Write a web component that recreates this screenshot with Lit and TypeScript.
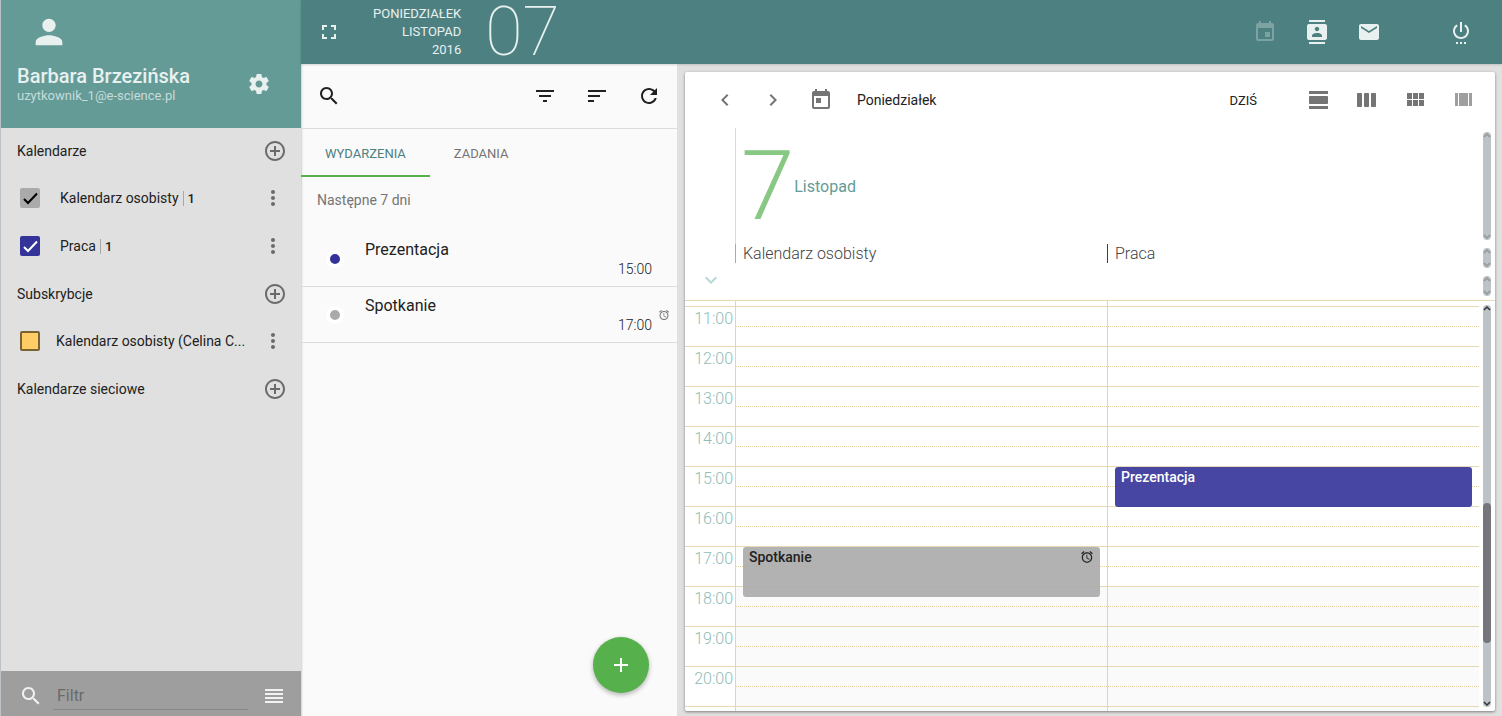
import { LitElement, html, css, svg } from "lit";
import { customElement, property } from "lit/decorators.js";
import { classMap } from "lit/directives/class-map.js";
import { styleMap } from "lit/directives/style-map.js";

const ICONS: Record<string, string> = {
  person: "M12 12c2.21 0 4-1.79 4-4s-1.79-4-4-4-4 1.79-4 4 1.79 4 4 4zm0 2c-2.67 0-8 1.34-8 4v2h16v-2c0-2.66-5.33-4-8-4z",
  settings:
    "M19.43 12.98c.04-.32.07-.64.07-.98s-.03-.66-.07-.98l2.11-1.65c.19-.15.24-.42.12-.64l-2-3.46c-.12-.22-.39-.3-.61-.22l-2.49 1c-.52-.4-1.08-.73-1.69-.98l-.38-2.65C14.46 2.18 14.25 2 14 2h-4c-.25 0-.46.18-.49.42l-.38 2.65c-.61.25-1.17.59-1.69.98l-2.49-1c-.23-.09-.49 0-.61.22l-2 3.46c-.13.22-.07.49.12.64l2.11 1.65c-.04.32-.07.65-.07.98s.03.66.07.98l-2.11 1.65c-.19.15-.24.42-.12.64l2 3.46c.12.22.39.3.61.22l2.49-1c.52.4 1.08.73 1.69.98l.38 2.65c.03.24.24.42.49.42h4c.25 0 .46-.18.49-.42l.38-2.65c.61-.25 1.17-.59 1.69-.98l2.49 1c.23.09.49 0 .61-.22l2-3.46c.12-.22.07-.49-.12-.64l-2.11-1.65zM12 15.5c-1.93 0-3.5-1.57-3.5-3.5s1.57-3.5 3.5-3.5 3.5 1.57 3.5 3.5-1.57 3.5-3.5 3.5z",
  addCircle:
    "M13 7h-2v4H7v2h4v4h2v-4h4v-2h-4V7zm-1-5C6.48 2 2 6.48 2 12s4.48 10 10 10 10-4.48 10-10S17.52 2 12 2zm0 18c-4.41 0-8-3.59-8-8s3.59-8 8-8 8 3.59 8 8-3.59 8-8 8z",
  more: "M12 8c1.1 0 2-.9 2-2s-.9-2-2-2-2 .9-2 2 .9 2 2 2zm0 2c-1.1 0-2 .9-2 2s.9 2 2 2 2-.9 2-2-.9-2-2-2zm0 6c-1.1 0-2 .9-2 2s.9 2 2 2 2-.9 2-2-.9-2-2-2z",
  search:
    "M15.5 14h-.79l-.28-.27C15.41 12.59 16 11.11 16 9.5 16 5.91 13.09 3 9.5 3S3 5.91 3 9.5 5.91 16 9.5 16c1.61 0 3.09-.59 4.23-1.57l.27.28v.79l5 4.99L20.49 19l-4.99-5zm-6 0C7.01 14 5 11.99 5 9.5S7.01 5 9.5 5 14 7.01 14 9.5 11.99 14 9.5 14z",
  reorder: "M3 15h18v-2H3v2zm0 4h18v-2H3v2zm0-8h18V9H3v2zm0-6v2h18V5H3z",
  fullscreen: "M7 14H5v5h5v-2H7v-3zm-2-4h2V7h3V5H5v5zm12 7h-3v2h5v-5h-2v3zM14 5v2h3v3h2V5h-5z",
  event:
    "M17 12h-5v5h5v-5zM16 1v2H8V1H6v2H5c-1.11 0-1.99.9-1.99 2L3 19c0 1.1.89 2 2 2h14c1.1 0 2-.9 2-2V5c0-1.1-.9-2-2-2h-1V1h-2zm3 18H5V8h14v11z",
  contacts:
    "M20 0H4v2h16V0zM4 24h16v-2H4v2zM20 4H4c-1.1 0-2 .9-2 2v12c0 1.1.9 2 2 2h16c1.1 0 2-.9 2-2V6c0-1.1-.9-2-2-2zm-8 2.75c1.24 0 2.25 1.01 2.25 2.25s-1.01 2.25-2.25 2.25S9.75 10.24 9.75 9 10.76 6.75 12 6.75zM17 17H7v-1.5c0-1.67 3.33-2.5 5-2.5s5 .83 5 2.5V17z",
  mail: "M20 4H4c-1.1 0-1.99.9-1.99 2L2 18c0 1.1.9 2 2 2h16c1.1 0 2-.9 2-2V6c0-1.1-.9-2-2-2zm0 4l-8 5-8-5V6l8 5 8-5v2z",
  power:
    "M7 24h2v-2H7v2zm4 0h2v-2h-2v2zm2-22h-2v10h2V2zm3.56 2.44l-1.45 1.45C16.84 6.94 18 8.83 18 11c0 3.31-2.69 6-6 6s-6-2.69-6-6c0-2.17 1.16-4.06 2.88-5.12L7.44 4.44C5.36 5.88 4 8.28 4 11c0 4.42 3.58 8 8 8s8-3.58 8-8c0-2.72-1.36-5.12-3.44-6.56zM15 24h2v-2h-2v2z",
  filter: "M10 18h4v-2h-4v2zM3 6v2h18V6H3zm3 7h12v-2H6v2z",
  sort: "M3 18h6v-2H3v2zM3 6v2h18V6H3zm0 7h12v-2H3v2z",
  refresh:
    "M17.65 6.35C16.2 4.9 14.21 4 12 4c-4.42 0-7.99 3.58-7.99 8s3.57 8 7.99 8c3.73 0 6.84-2.55 7.73-6h-2.08c-.82 2.33-3.04 4-5.65 4-3.31 0-6-2.69-6-6s2.69-6 6-6c1.66 0 3.14.69 4.22 1.78L13 11h7V4l-2.35 2.35z",
  left: "M15.41 7.41L14 6l-6 6 6 6 1.41-1.41L10.83 12z",
  right: "M10 6L8.59 7.41 13.17 12l-4.58 4.59L10 18l6-6z",
  down: "M16.59 8.59L12 13.17 7.41 8.59 6 10l6 6 6-6z",
  today:
    "M19 3h-1V1h-2v2H8V1H6v2H5c-1.11 0-1.99.9-1.99 2L3 19c0 1.1.89 2 2 2h14c1.1 0 2-.9 2-2V5c0-1.1-.9-2-2-2zm0 16H5V8h14v11zM7 10h5v5H7z",
  viewDay:
    "M2 21h19v-3H2v3zM20 8H3c-.55 0-1 .45-1 1v6c0 .55.45 1 1 1h17c.55 0 1-.45 1-1V9c0-.55-.45-1-1-1zM2 3v3h19V3H2z",
  viewWeek:
    "M6 5H3c-.55 0-1 .45-1 1v12c0 .55.45 1 1 1h3c.55 0 1-.45 1-1V6c0-.55-.45-1-1-1zm14 0h-3c-.55 0-1 .45-1 1v12c0 .55.45 1 1 1h3c.55 0 1-.45 1-1V6c0-.55-.45-1-1-1zm-7 0h-3c-.55 0-1 .45-1 1v12c0 .55.45 1 1 1h3c.55 0 1-.45 1-1V6c0-.55-.45-1-1-1z",
  viewModule: "M4 11h5V5H4v6zm0 7h5v-6H4v6zm6 0h5v-6h-5v6zm6 0h5v-6h-5v6zm-6-7h5V5h-5v6zm6-6v6h5V5h-5z",
  viewArray: "M4 18h3V5H4v13zm14-13v13h3V5h-3zM8 18h9V5H8v13z",
  add: "M19 13h-6v6h-2v-6H5v-2h6V5h2v6h6v2z",
  alarm:
    "M22 5.72l-4.6-3.86-1.29 1.53 4.6 3.86L22 5.72zM7.88 3.39L6.6 1.86 2 5.71l1.29 1.53 4.59-3.85zM12.5 8H11v6l4.75 2.85.75-1.23-4-2.37V8zM12 4c-4.97 0-9 4.03-9 9s4.02 9 9 9c4.97 0 9-4.03 9-9s-4.03-9-9-9zm0 16c-3.87 0-7-3.13-7-7s3.13-7 7-7 7 3.13 7 7-3.13 7-7 7z",
};

const icon = (name: string, size = 24) =>
  html`<svg width=${size} height=${size} viewBox="0 0 24 24" fill="currentColor" aria-hidden="true">
    ${svg`<path d=${ICONS[name]}></path>`}
  </svg>`;

const shared = css`
  * {
    box-sizing: border-box;
  }
  svg {
    display: block;
    flex: none;
  }
  button {
    display: flex;
    align-items: center;
    justify-content: center;
    margin: 0;
    padding: 0;
    border: 0;
    background: none;
    color: inherit;
    font: inherit;
    cursor: pointer;
  }
  h1,
  h2,
  p,
  ul {
    margin: 0;
    padding: 0;
    font: inherit;
    list-style: none;
  }
`;

interface Calendar {
  id: string;
  name: string;
  color: string;
  tick: string;
  checked: boolean;
  count?: number;
}

const OWN: Calendar[] = [
  { id: "personal", name: "Kalendarz osobisty", color: "#aaaaaa", tick: "#000000", checked: true, count: 1 },
  { id: "work", name: "Praca", color: "#333399", tick: "#ffffff", checked: true, count: 1 },
];

const SUBSCRIBED: Calendar[] = [
  { id: "celina", name: "Kalendarz osobisty (Celina C...", color: "#ffcc66", tick: "#000000", checked: false },
];

@customElement("calendar-sidebar")
export class CalendarSidebar extends LitElement {
  static styles = [
    shared,
    css`
      :host {
        display: flex;
        flex-direction: column;
        border-left: 1px solid #bcc2c6;
        background: #e0e0e0;
        color: #212121;
        font-size: 14px;
      }
      .profile {
        display: flex;
        flex-direction: column;
        height: 128px;
        padding: 12px 16px 0;
        background: #649b97;
        color: #e8f1f0;
      }
      .avatar {
        padding-left: 12px;
      }
      .account {
        display: flex;
        align-items: center;
        justify-content: space-between;
        margin-top: 12px;
        padding-right: 14px;
      }
      .name {
        font-size: 20px;
        font-weight: 500;
        line-height: 24px;
      }
      .mail {
        font-size: 13px;
        line-height: 16px;
        color: #c6dcda;
      }
      .lists {
        flex: 1;
        min-height: 0;
        overflow: hidden;
      }
      .heading,
      .row {
        display: flex;
        align-items: center;
        color: #212121;
      }
      .heading {
        height: 47px;
        padding: 0 14px 2px 16px;
        justify-content: space-between;
      }
      .row {
        height: 48px;
        padding: 0 16px 2px 19px;
      }
      .heading button,
      .row button {
        color: #6b6b6b;
      }
      .pick {
        display: flex;
        flex: 1;
        min-width: 0;
        align-items: center;
        gap: 20px;
      }
      .subscribed .pick {
        gap: 16px;
      }
      .box {
        display: grid;
        flex: none;
      }
      .box > * {
        grid-area: 1 / 1;
      }
      .box input {
        width: 20px;
        height: 20px;
        margin: 0;
        appearance: none;
        border-radius: 2px;
      }
      .box input:not(:checked) {
        border: 2px solid #7a6233;
      }
      .tick {
        pointer-events: none;
      }
      .label {
        white-space: nowrap;
      }
      .count {
        margin-left: 4px;
        padding-left: 4px;
        border-left: 1px solid #a8a8a8;
        font-size: 13px;
        font-weight: 500;
      }
      .footer {
        display: flex;
        align-items: center;
        height: 45px;
        padding: 4px 15px 0 18px;
        background: #9e9e9e;
        color: #f2f2f2;
      }
      .filter {
        flex: 1;
        min-width: 0;
        height: 28px;
        margin: 0 14px 0 10px;
        padding: 0 4px;
        border: 0;
        border-bottom: 1px solid #888888;
        outline: 0;
        background: none;
        color: #212121;
        font: inherit;
        font-size: 16px;
      }
      .filter::placeholder {
        color: #6a6a6a;
      }
    `,
  ];

  private heading(text: string) {
    return html`<div class="heading">
      <h2>${text}</h2>
      <button aria-label="Dodaj: ${text}">${icon("addCircle")}</button>
    </div>`;
  }

  private row(c: Calendar) {
    return html`<li class="row">
      <label class="pick">
        <span class="box">
          <input type="checkbox" .checked=${c.checked} style=${styleMap({ background: c.color })} />
          ${c.checked
            ? html`<svg class="tick" width="20" height="20" viewBox="0 0 20 20" fill="none" stroke=${c.tick} stroke-width="2">
                <path d="M4 11l4 4 9-9.500"></path>
              </svg>`
            : null}
        </span>
        <span class="label">${c.name}${c.count ? html`<span class="count">${c.count}</span>` : null}</span>
      </label>
      <button aria-label="Opcje: ${c.name}">${icon("more")}</button>
    </li>`;
  }

  render() {
    return html`
      <header class="profile">
        <div class="avatar">${icon("person", 40)}</div>
        <div class="account">
          <div>
            <h1 class="name">Barbara Brzezińska</h1>
            <p class="mail">uzytkownik_1@e-science.pl</p>
          </div>
          <button aria-label="Ustawienia">${icon("settings")}</button>
        </div>
      </header>
      <div class="lists">
        ${this.heading("Kalendarze")}
        <ul>
          ${OWN.map((c) => this.row(c))}
        </ul>
        ${this.heading("Subskrybcje")}
        <ul class="subscribed">
          ${SUBSCRIBED.map((c) => this.row(c))}
        </ul>
        ${this.heading("Kalendarze sieciowe")}
      </div>
      <footer class="footer">
        ${icon("search")}
        <input class="filter" type="text" placeholder="Filtr" aria-label="Filtr" />
        <button aria-label="Lista">${icon("reorder")}</button>
      </footer>
    `;
  }
}

@customElement("top-bar")
export class TopBar extends LitElement {
  static styles = [
    shared,
    css`
      :host {
        display: flex;
        align-items: center;
        height: 64px;
        padding: 0 29px 0 16px;
        background: #4d8080;
        color: #e8f0f0;
        font-size: 13px;
      }
      .date {
        margin-left: 32px;
        line-height: 18px;
        text-align: right;
        text-transform: uppercase;
      }
      .day {
        flex: 1;
        margin-left: 24px;
        font-size: 68px;
        font-weight: 100;
        line-height: 64px;
      }
      .modules {
        display: flex;
        gap: 28px;
      }
      .current {
        opacity: 0.3;
      }
      .logout {
        margin-left: 68px;
      }
    `,
  ];

  render() {
    return html`
      <button aria-label="Pełny ekran">${icon("fullscreen")}</button>
      <div class="date">
        <div>Poniedziałek</div>
        <div>Listopad</div>
        <div>2016</div>
      </div>
      <div class="day">07</div>
      <nav class="modules">
        <button class="current" aria-label="Kalendarz" disabled>${icon("event")}</button>
        <button aria-label="Kontakty">${icon("contacts")}</button>
        <button aria-label="Poczta">${icon("mail")}</button>
      </nav>
      <button class="logout" aria-label="Wyloguj">${icon("power")}</button>
    `;
  }
}

interface Entry {
  title: string;
  start: number;
  hours: number;
  calendar: number;
  color: string;
  fill: string;
  ink: string;
  alarm: boolean;
}

const ENTRIES: Entry[] = [
  { title: "Prezentacja", start: 15, hours: 1, calendar: 1, color: "#333399", fill: "rgba(51, 51, 153, 0.9)", ink: "#ffffff", alarm: false },
  { title: "Spotkanie", start: 17, hours: 1.25, calendar: 0, color: "#aaaaaa", fill: "rgba(170, 170, 170, 0.9)", ink: "#212121", alarm: true },
];

@customElement("event-list")
export class EventList extends LitElement {
  static styles = [
    shared,
    css`
      :host {
        display: block;
        position: relative;
        background: #fafafa;
        color: #212121;
        font-size: 14px;
        box-shadow: inset 2px 0 2px -1px #d0d0d0;
      }
      .tools {
        display: flex;
        align-items: center;
        gap: 28px;
        height: 65px;
        padding: 0 16px;
        border-bottom: 1px solid #dcdcdc;
      }
      .tools .find {
        margin-right: auto;
      }
      .tabs {
        display: flex;
      }
      .tab {
        height: 48px;
        padding: 2px 24px 0;
        border-bottom: 2px solid transparent;
        color: #757575;
        font-size: 13px;
        text-transform: uppercase;
      }
      .tab.active {
        border-color: #56b04c;
        color: #4d8080;
      }
      .period {
        height: 54px;
        padding: 0 16px;
        color: #757575;
        line-height: 46px;
      }
      .item {
        display: grid;
        grid-template-columns: 40px 1fr auto 18px;
        align-items: start;
        height: 56px;
        padding: 7px 7px 0 24px;
        border-bottom: 1px solid #dcdcdc;
      }
      .dot {
        width: 18px;
        height: 18px;
        margin-top: 12px;
        margin-left: 1px;
        border: 4px solid #ffffff;
        border-radius: 50%;
      }
      .title {
        font-size: 16px;
        line-height: 24px;
      }
      .time {
        margin-top: 20px;
        line-height: 22px;
        font-weight: 300;
      }
      .bell {
        margin-top: 15px;
        margin-left: 6px;
        color: #757575;
      }
      .add {
        position: absolute;
        right: 28px;
        bottom: 23px;
        width: 56px;
        height: 56px;
        border-radius: 50%;
        background: #56b04c;
        color: #ffffff;
        box-shadow: 0 2px 5px rgba(0, 0, 0, 0.3);
      }
    `,
  ];

  render() {
    return html`
      <div class="tools">
        <button class="find" aria-label="Szukaj">${icon("search")}</button>
        <button aria-label="Filtruj">${icon("filter")}</button>
        <button aria-label="Sortuj">${icon("sort")}</button>
        <button aria-label="Odśwież">${icon("refresh")}</button>
      </div>
      <div class="tabs" role="tablist">
        <button class="tab active" role="tab" aria-selected="true">Wydarzenia</button>
        <button class="tab" role="tab" aria-selected="false">Zadania</button>
      </div>
      <h2 class="period">Następne 7 dni</h2>
      <ul>
        ${ENTRIES.map(
          (e) => html`<li class="item">
            <span class="dot" style=${styleMap({ backgroundColor: e.color })}></span>
            <span class="title">${e.title}</span>
            <time class="time">${e.start}:00</time>
            ${e.alarm ? html`<span class="bell">${icon("alarm", 12)}</span>` : null}
          </li>`,
        )}
      </ul>
      <button class="add" aria-label="Nowe wydarzenie">${icon("add")}</button>
    `;
  }
}

@customElement("scroll-rail")
export class ScrollRail extends LitElement {
  @property({ type: Boolean }) active = false;

  static styles = css`
    :host {
      display: flex;
      flex: none;
      width: 8px;
      padding: 4px;
    }
    .track {
      display: flex;
      flex: 1;
      flex-direction: column;
      border-radius: 4px;
      background: #bcc2c6;
      color: #90969a;
    }
    .track.active {
      color: #30343a;
    }
    svg {
      display: block;
      flex: none;
    }
    .before {
      flex: 191;
    }
    .thumb {
      flex: 141;
      border-radius: 4px;
      background: #75767b;
    }
    .after {
      flex: 56;
    }
    .fill {
      flex: 1;
    }
  `;

  render() {
    const arrow = (d: string) =>
      html`<svg width="8" height="8" viewBox="0 0 8 8" fill="none" stroke="currentColor" stroke-width="1.500"><path d=${d}></path></svg>`;
    return html`<div class=${classMap({ track: true, active: this.active })}>
      ${arrow("M1 5l3-3 3 3")}
      ${this.active
        ? html`<div class="before"></div><div class="thumb"></div><div class="after"></div>`
        : html`<div class="fill"></div>`}
      ${arrow("M1 3l3 3 3-3")}
    </div>`;
  }
}

const HOUR_PX = 40;
const LEAD_PX = 5;
const FIRST_HOUR = 11;
const LAST_HOUR = 20;

@customElement("day-view")
export class DayView extends LitElement {
  static styles = [
    shared,
    css`
      :host {
        display: flex;
        flex-direction: column;
        overflow: hidden;
        border-radius: 2px;
        background: #ffffff;
        color: #212121;
        font-size: 14px;
        box-shadow: 0 1px 3px rgba(0, 0, 0, 0.45);
      }
      scroll-rail {
        box-sizing: content-box;
      }
      .tools {
        display: flex;
        flex: none;
        align-items: center;
        gap: 24px;
        height: 56px;
        padding: 0 20px 0 28px;
        color: #757575;
      }
      .weekday {
        flex: 1;
        color: #212121;
      }
      .now {
        margin-right: 26px;
        color: #212121;
        font-size: 13px;
        text-transform: uppercase;
      }
      .faded {
        color: #9e9e9e;
      }
      .band {
        display: flex;
        flex: none;
      }
      .gutter {
        flex: none;
        width: 50px;
      }
      .summary {
        height: 116px;
      }
      .date {
        display: flex;
        flex: 1;
        align-items: center;
        padding-left: 5px;
        border-left: 1px solid #e6d9b5;
      }
      .number {
        color: #88c883;
        font-size: 96px;
        font-weight: 300;
        line-height: 112px;
      }
      .month {
        color: #649b97;
        font-size: 16px;
      }
      .names {
        height: 28px;
      }
      .columns {
        display: flex;
        flex: 1;
      }
      .columns > * {
        flex: 1 1 0;
        min-width: 0;
      }
      .name {
        height: 19px;
        padding-left: 7px;
        border-left: 1px solid #333399;
        color: #424242;
        font-size: 16px;
        font-weight: 300;
        line-height: 19px;
      }
      .allday {
        height: 29px;
        border-bottom: 1px solid #e6d9b5;
      }
      .expand {
        width: 52px;
        padding-bottom: 12px;
        color: #b5d8d5;
      }
      .allday .spacer {
        flex: 1;
      }
      .hours {
        display: flex;
        flex: 1;
        min-height: 0;
      }
      .grid {
        display: flex;
        flex: 1;
        flex-direction: column;
        position: relative;
        min-width: 0;
        padding-top: 5px;
        overflow: hidden;
      }
      .slot {
        display: flex;
        flex: none;
        height: 40px;
        border-top: 1px solid #e6d9b5;
      }
      .rest {
        flex: 1;
        height: auto;
      }
      .hour {
        flex: none;
        width: 50px;
        padding: 0 2px;
        color: #8fbcb8;
        font-size: 16px;
        font-weight: 300;
        line-height: 24px;
        text-align: right;
      }
      .half {
        display: flex;
        flex: 1;
        flex-direction: column;
      }
      .half::before {
        content: "";
        height: 19px;
        border-bottom: 1px dotted #e6d3a0;
      }
      .rest .half::before {
        border: 0;
      }
      .off .half {
        background: #fafafa;
      }
      .layer {
        position: absolute;
        inset: 0 0 0 50px;
        display: flex;
      }
      .lane {
        position: relative;
        flex: 1 1 0;
        border-left: 1px solid #e0d5b8;
      }
      .entry {
        position: absolute;
        right: 7px;
        left: 7px;
        align-items: flex-start;
        justify-content: space-between;
        padding: 0 6px;
        border-radius: 3px;
        font-weight: 500;
        line-height: 20px;
      }
      .entry svg {
        margin-top: 3px;
      }
    `,
  ];

  render() {
    const hours = Array.from({ length: LAST_HOUR - FIRST_HOUR + 1 }, (_, i) => FIRST_HOUR + i);
    return html`
      <div class="tools">
        <button aria-label="Poprzedni dzień">${icon("left")}</button>
        <button aria-label="Następny dzień">${icon("right")}</button>
        <button aria-label="Wybierz datę">${icon("today")}</button>
        <h1 class="weekday">Poniedziałek</h1>
        <button class="now">Dziś</button>
        <button aria-label="Dzień">${icon("viewDay")}</button>
        <button aria-label="Tydzień">${icon("viewWeek")}</button>
        <button aria-label="Miesiąc">${icon("viewModule")}</button>
        <button class="faded" aria-label="Kolumny">${icon("viewArray")}</button>
      </div>
      <div class="band summary">
        <div class="gutter"></div>
        <div class="date"><span class="number">7</span><span class="month">Listopad</span></div>
        <scroll-rail></scroll-rail>
      </div>
      <div class="band names">
        <div class="gutter"></div>
        <div class="columns">
          ${OWN.map((c) => html`<div class="name" style=${styleMap({ borderColor: c.color })}>${c.name}</div>`)}
        </div>
        <scroll-rail></scroll-rail>
      </div>
      <div class="band allday">
        <button class="expand" aria-label="Rozwiń">${icon("down")}</button>
        <div class="spacer"></div>
        <scroll-rail></scroll-rail>
      </div>
      <div class="hours">
        <div class="grid">
          ${hours.map(
            (h) => html`<div class=${classMap({ slot: true, off: h < 8 || h >= 18 })}>
              <div class="hour">${h}:00</div>
              <div class="half"></div>
            </div>`,
          )}
          <div class="slot rest off">
            <div class="gutter"></div>
            <div class="half"></div>
          </div>
          <div class="layer">
            ${OWN.map(
              (_, i) => html`<div class="lane">
                ${ENTRIES.filter((e) => e.calendar === i).map(
                  (e) => html`<button
                    class="entry"
                    style=${styleMap({
                      top: `${LEAD_PX + (e.start - FIRST_HOUR) * HOUR_PX + 1}px`,
                      height: `${e.hours * HOUR_PX}px`,
                      background: e.fill,
                      color: e.ink,
                    })}
                  >
                    ${e.title}${e.alarm ? icon("alarm", 14) : null}
                  </button>`,
                )}
              </div>`,
            )}
          </div>
        </div>
        <scroll-rail active></scroll-rail>
      </div>
    `;
  }
}

@customElement("app-root")
export class AppRoot extends LitElement {
  static styles = css`
    :host {
      display: grid;
      grid-template-columns: 301px 376px minmax(0, 1fr);
      grid-template-rows: 64px minmax(0, 1fr);
      height: 100vh;
      overflow: hidden;
      background: #e0e0e0;
      font-family: Roboto, "Noto Sans", sans-serif;
    }
    calendar-sidebar {
      grid-row: 1 / 3;
    }
    top-bar {
      grid-column: 2 / 4;
      box-shadow: 0 1px 2px rgba(0, 0, 0, 0.15);
      z-index: 1;
    }
    day-view {
      margin: 8px 7px 5px 8px;
    }
  `;

  render() {
    return html`
      <calendar-sidebar></calendar-sidebar>
      <top-bar></top-bar>
      <event-list></event-list>
      <day-view></day-view>
    `;
  }
}
